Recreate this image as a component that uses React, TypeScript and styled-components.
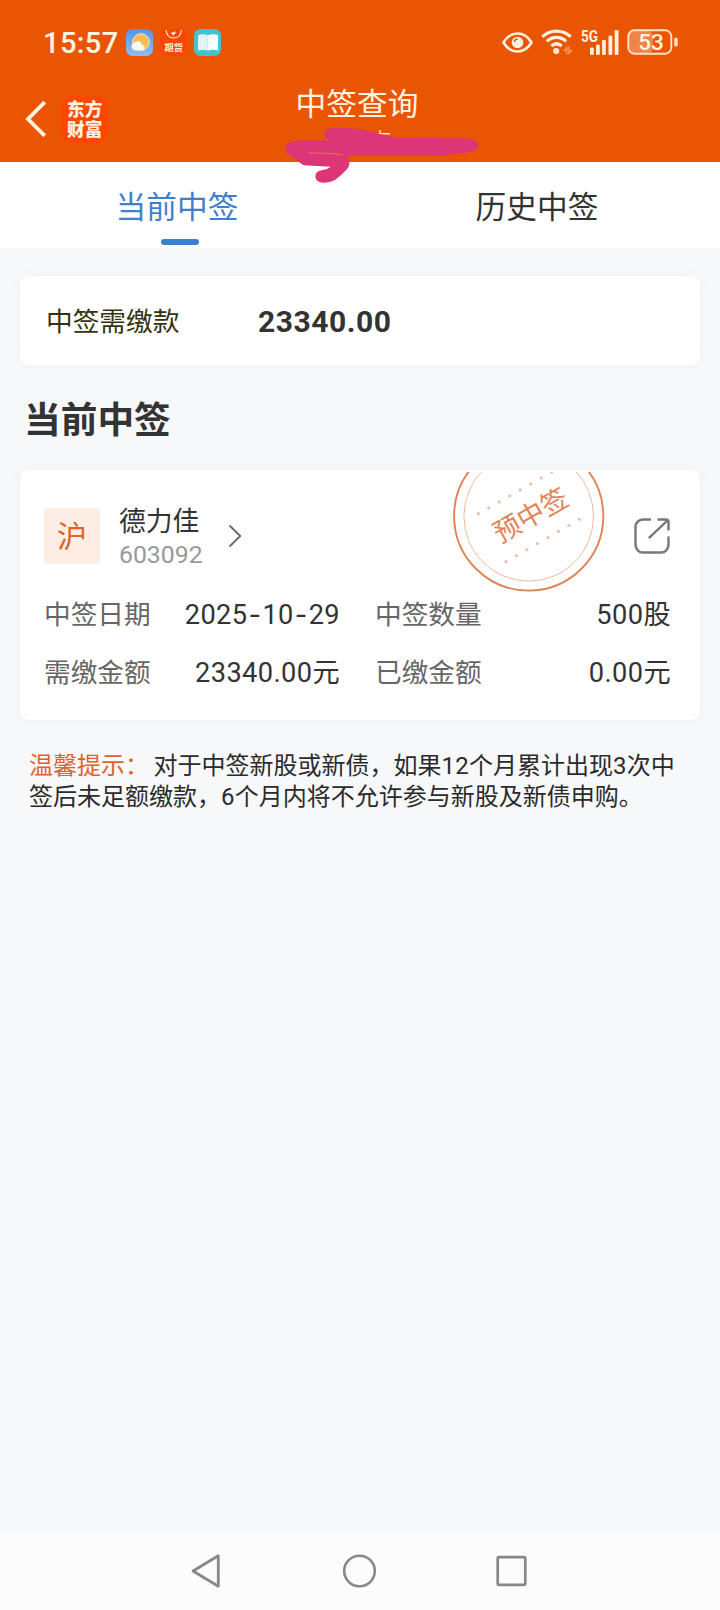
import React from "react";
import styled, { createGlobalStyle } from "styled-components";

const cjk = '"Noto Sans CJK SC", sans-serif';
const latin = 'Roboto, "Noto Sans CJK SC", sans-serif';

const GlobalStyle = createGlobalStyle`
  *, *::before, *::after { box-sizing: border-box; }
  body { margin: 0; background: #f7f8fa; font-family: ${cjk}; color: #333; }
  svg { display: block; flex: none; overflow: visible; }
`;

const Screen = styled.div`
  width: 720px;
  height: 1610px;
  display: flex;
  flex-direction: column;
  background: #f7f8fa;
  overflow: hidden;
`;

const Header = styled.header`
  position: relative;
  height: 162px;
  background: #ea5504;
  color: #fff3e2;
  flex: none;
`;

const StatusBar = styled.div`
  height: 84px;
  padding: 0 42px 0 43px;
  display: flex;
  align-items: center;
  justify-content: space-between;
`;

const StatusGroup = styled.div<{ $gap: number }>`
  display: flex;
  align-items: center;
  gap: ${(p) => p.$gap}px;
`;

const Clock = styled.span`
  width: 76px;
  font: 500 29px/30px ${latin};
  letter-spacing: 0.4px;
  padding-top: 1px;
  white-space: nowrap;
`;

const AppBar = styled.div`
  height: 78px;
  display: grid;
  grid-template-columns: 1fr auto 1fr;
  padding: 0 6px 0 0;
`;

const BackArea = styled.div`
  display: flex;
  gap: 15px;
  padding: 10px 0 0 25px;
  align-items: center;
  height: 58px;
  margin-top: 1px;
`;

const Brand = styled.div`
  width: 47px;
  height: 47px;
  padding: 2px 5px 0 6px;
  border-radius: 10px;
  background: #ff4700;
  font: 900 17.7px/20px "Noto Sans CJK SC", sans-serif;
  color: #fff1e0;
  word-break: break-all;
`;

const Title = styled.h1`
  margin: -2px 0 0;
  font: 400 30.7px/40px ${cjk};
  white-space: nowrap;
`;

const Scribble = styled.svg`
  position: absolute;
  left: 280px;
  top: 122px;
  z-index: 2;
`;

const Tabs = styled.nav`
  height: 86px;
  flex: none;
  display: grid;
  grid-template-columns: 1fr 1fr;
  background: #fff;
`;

const Tab = styled.div<{ $active?: boolean }>`
  display: flex;
  flex-direction: column;
  align-items: center;
  padding-top: 21px;
  font-size: 30.7px;
  line-height: 44px;
  color: ${(p) => (p.$active ? "#3f7fcf" : "#333")};
`;

const TabLabel = styled.span`
  padding-right: 6px;
`;

const Indicator = styled.span`
  width: 38px;
  height: 6px;
  border-radius: 3px;
  margin-top: 12px;
  background: #3f7fcf;
`;

const Content = styled.main`
  flex: 1;
  padding: 28px 20px 0;
`;

const Card = styled.section`
  position: relative;
  border-radius: 9px;
  background: #fff;
  box-shadow: 0 0 12px rgba(60, 75, 90, 0.05);
`;

const DueCard = styled(Card)`
  height: 89px;
  display: flex;
  align-items: center;
  padding-left: 26px;
`;

const DueLabel = styled.span`
  width: 212px;
  font-size: 26.7px;
  color: #33330f;
  padding-bottom: 2px;
`;

const DueAmount = styled.strong`
  font: 700 30px/36px ${latin};
  letter-spacing: 0.55px;
  padding-top: 3px;
`;

const SectionTitle = styled.h2`
  margin: 0;
  height: 105px;
  padding: 26px 0 0 4px;
  font: 700 36.7px/52px ${cjk};
`;

const StockCard = styled(Card)`
  height: 250px;
  padding: 32px 29px 0 24px;
`;

const StockHead = styled.div`
  display: flex;
  align-items: center;
  height: 68px;
`;

const Market = styled.span`
  width: 56px;
  height: 56px;
  border-radius: 3px;
  background: #fdede4;
  color: #d9652a;
  font-size: 30px;
  line-height: 53px;
  text-align: center;
`;

const StockName = styled.div`
  width: 90px;
  margin: 0 19px 0 19px;
  display: flex;
  flex-direction: column;
  white-space: nowrap;
`;

const Name = styled.span`
  font-size: 26.8px;
  line-height: 35px;
`;

const Code = styled.span`
  font: 400 24.8px/32px ${latin};
  color: #999;
  padding-top: 2px;
`;

const ShareSlot = styled.div`
  margin: 0 1px 0 auto;
`;

const Stamp = styled.svg`
  position: absolute;
  left: 429px;
  top: 2px;
  overflow: hidden;
`;

const Details = styled.div`
  display: grid;
  grid-template-columns: 296px 296px;
  column-gap: 35px;
  grid-auto-rows: 58px;
  margin-top: 15px;
`;

const Detail = styled.div`
  display: flex;
  justify-content: space-between;
  align-items: center;
  white-space: nowrap;
`;

const DetailLabel = styled.span`
  font-size: 26.7px;
  color: #666;
  padding-bottom: 4px;
`;

const DetailValue = styled.span`
  font: 400 27.2px/36px ${latin};
  letter-spacing: 0.4px;
  padding-top: 2px;
`;

const Dash = styled.span`
  font-family: Inter, sans-serif;
  padding: 0 1px;
`;

const Tip = styled.p`
  margin: 31px 0 0;
  padding: 0 10px 0 9px;
  font: 400 24px/31px ${latin};
  color: #2b2b2b;
  white-space: nowrap;
`;

const TipLead = styled.span`
  color: #e0622a;
  margin-right: -1.5px;
`;

const Num = styled.span`
  letter-spacing: 0.3px;
`;

const NavBar = styled.footer`
  height: 78px;
  flex: none;
  background: #fcfcfc;
  display: flex;
  align-items: center;
  justify-content: space-between;
  padding: 0 193px 0 191px;
`;

const details: { label: string; value: string }[] = [
  { label: "中签日期", value: "2025-10-29" },
  { label: "中签数量", value: "500股" },
  { label: "需缴金额", value: "23340.00元" },
  { label: "已缴金额", value: "0.00元" },
];

const WeatherIcon = () => (
  <svg width="27" height="27" viewBox="0 0 27 27">
    <defs>
      <linearGradient id="sky" x1="0" y1="0" x2="0" y2="1">
        <stop offset="0" stopColor="#5394ea" />
        <stop offset="1" stopColor="#8dbdf5" />
      </linearGradient>
    </defs>
    <rect width="27" height="27" rx="6.5" fill="url(#sky)" />
    <circle cx="15" cy="13" r="8.3" fill="#f7bd55" stroke="#ffe6b0" strokeWidth="1" />
    <path d="M9 21.5a4 4 0 0 1-.6-7.8 4.3 4.3 0 0 1 7.5 2 3 3 0 0 1 .9 5.8z" fill="#fff7ec" />
  </svg>
);

const FuturesIcon = () => (
  <svg width="27" height="27" viewBox="0 0 27 27">
    <rect width="27" height="27" rx="6.5" fill="#fb4704" />
    <path d="M6 1C6.5 6 9.500 9 13.800 9S21 6 21.500 1" fill="none" stroke="#fff1e0" strokeWidth="1.1" />
    <path d="M10.500 4L16 2.200l-1 1.500 1 1-2 .5-.3 1.800-1.700-2z" fill="#fff1e0" />
    <text x="13.700" y="22" textAnchor="middle" fontSize="9.200" fontWeight="700" fontFamily="Noto Sans CJK SC" fill="#fff1e0">期货</text>
  </svg>
);

const BookIcon = () => (
  <svg width="27" height="27" viewBox="0 0 27 27">
    <rect width="27" height="27" rx="6.5" fill="#42c3cf" />
    <path d="M4 6.200c3.500-1.500 7-1.200 9.800 0v15.500C11 20.500 7.500 20.500 4 21.500z" fill="#e0f4f5" />
    <path d="M24 6.200c-3.500-1.500-7-1.200-10.200 0v15.500c3-1.200 6.700-1.200 10.200-.2z" fill="#f7fdfb" />
  </svg>
);

const EyeIcon = () => (
  <svg width="31" height="21" viewBox="0 0 31 21" fill="none" stroke="#fff0dc">
    <path d="M1.500 10.500C5 4.500 10 1.500 15.500 1.500S26 4.500 29.500 10.500C26 16.500 21 19.500 15.500 19.500S5 16.500 1.500 10.500z" strokeWidth="2.600" strokeLinejoin="round" />
    <circle cx="15.500" cy="10.500" r="5.800" fill="#fff0dc" stroke="none" />
    <path d="M12.500 10a3 3 0 0 1 3-3" stroke="#ea5504" strokeWidth="1.400" />
  </svg>
);

const WifiIcon = () => (
  <svg width="32" height="26" viewBox="0 0 32 26" fill="none" stroke="#fff0dc" strokeWidth="3.200">
    <path d="M1.200 7.800C9.500.2 21.500.2 29.800 7.800" />
    <path d="M5.800 12.400C11.500 7 19.500 7 25.200 12.400" />
    <path d="M10.300 17c3.300-2.900 7.100-2.900 10.400 0" />
    <circle cx="15.200" cy="22" r="3" fill="#fff0dc" stroke="none" />
    <path d="M25.800 17.500v8M28 17.500v8" stroke="#f4935c" strokeWidth="1.500" />
    <path d="M26 17.500l-4 4.500h4zM28 25.500l4-4.500h-4z" fill="#f4935c" stroke="none" />
  </svg>
);

const SignalIcon = () => (
  <svg width="38" height="26" viewBox="0 0 38 26" fill="#fff0dc">
    <text x="0" y="13" fontSize="16" fontWeight="700" fontFamily="Roboto" textLength="17" lengthAdjust="spacingAndGlyphs">5G</text>
    <rect x="9" y="18.500" width="3.800" height="7.500" rx="1.300" />
    <rect x="15" y="15.500" width="3.800" height="10.500" rx="1.300" />
    <rect x="21" y="11" width="3.800" height="15" rx="1.300" />
    <rect x="27.500" y="6.500" width="3.800" height="19.500" rx="1.300" />
    <rect x="33.700" y="1" width="3.800" height="25" rx="1.300" />
  </svg>
);

const BatteryIcon = () => (
  <svg width="51" height="26" viewBox="0 0 51 26">
    <rect x="2" y="2" width="24" height="22" rx="5" fill="#f0844a" />
    <rect x="1.300" y="1.300" width="43" height="23.400" rx="6" fill="none" stroke="#ffe3c8" strokeWidth="1.900" />
    <rect x="47.200" y="8.500" width="3.500" height="9" rx="1.500" fill="#ffe3c8" />
    <text x="24" y="21" textAnchor="middle" fontSize="22.500" fontWeight="500" fontFamily="Roboto" fill="#fff3e2">53</text>
  </svg>
);

const dots = Array.from({ length: 8 }, (_, i) => i);

export default function App() {
  return (
    <>
      <GlobalStyle />
      <Screen>
        <Header>
          <StatusBar>
            <StatusGroup $gap={7}>
              <Clock>15:57</Clock>
              <WeatherIcon />
              <FuturesIcon />
              <BookIcon />
            </StatusGroup>
            <StatusGroup $gap={8}>
              <EyeIcon />
              <WifiIcon />
              <SignalIcon />
              <BatteryIcon />
            </StatusGroup>
          </StatusBar>
          <AppBar>
            <BackArea>
              <svg width="21" height="36" viewBox="0 0 21 36" fill="none" stroke="#fff3e2" strokeWidth="3.800">
                <path d="M19.800 1.200L3 18l16.800 16.800" />
              </svg>
              <Brand>东方财富</Brand>
            </BackArea>
            <Title>中签查询</Title>
          </AppBar>
          <Scribble width="204" height="66" viewBox="0 0 204 66">
            <path d="M100 8v6M95 11.800h15M46 14.500l3 5" stroke="#ffe6d0" strokeWidth="1.500" />
            <g transform="translate(-20 -52) scale(.33333)">
              <path
                d="M193 190Q196 174 225 174C290 170 345 188 405 204L620 205Q652 208 655 227Q652 244 620 248C570 252 560 257 500 257H262Q272 270 266 290Q258 304 225 330Q210 339 188 338Q167 336 166 319Q167 304 185 301Q200 300 212 290L132 286Q122 282 115 273Q75 252 75 235Q78 214 110 212L204 211Q192 204 193 190z"
                fill="#dc3578"
              />
              <path d="M146 249L212 250L248 255" fill="none" stroke="#ee7348" strokeWidth="3" />
            </g>
          </Scribble>
        </Header>

        <Tabs>
          <Tab $active>
            <TabLabel>当前中签</TabLabel>
            <Indicator />
          </Tab>
          <Tab>
            <TabLabel>历史中签</TabLabel>
          </Tab>
        </Tabs>

        <Content>
          <DueCard>
            <DueLabel>中签需缴款</DueLabel>
            <DueAmount>23340.00</DueAmount>
          </DueCard>

          <SectionTitle>当前中签</SectionTitle>

          <StockCard>
            <Stamp width="160" height="126" viewBox="450 472 160 126">
              <g fill="none" stroke="#df8354">
                <circle cx="529.700" cy="516" r="74.600" strokeWidth="1.900" />
                <circle cx="529.700" cy="516.300" r="64.800" strokeWidth="0.900" stroke="#e8b498" />
              </g>
              <g fill="#ecc0a8">
                {dots.map((i) => (
                  <React.Fragment key={i}>
                    <circle cx={479.300 + i * 10.480} cy={513.700 - i * 5.950} r="1.600" />
                    <circle cx={507 + i * 10.480} cy={561.700 - i * 6.050} r="1.600" />
                  </React.Fragment>
                ))}
              </g>
              <text x="531.700" y="525" transform="rotate(-29.500 531.700 515)" textAnchor="middle" fontSize="27" fontFamily="Noto Sans CJK SC" fill="#e08458">
                预中签
              </text>
            </Stamp>
            <StockHead>
              <Market>沪</Market>
              <StockName>
                <Name>德力佳</Name>
                <Code>603092</Code>
              </StockName>
              <svg width="14" height="24" viewBox="0 0 14 24" fill="none" stroke="#666" strokeWidth="1.800">
                <path d="M1.500 1.500L12.300 12 1.500 22.500" />
              </svg>
              <ShareSlot>
                <svg width="36" height="36" viewBox="0 0 36 36" fill="none" stroke="#777" strokeWidth="2.400">
                  <path d="M17 1.500H9A7.500 7.500 0 0 0 1.500 9v18A7.500 7.500 0 0 0 9 34.500h18a7.500 7.500 0 0 0 7.500-7.500v-8.500" />
                  <path d="M23.500 1.500h8.500a2.500 2.500 0 0 1 2.500 2.500v8.500M34 2L14.800 20.200" />
                </svg>
              </ShareSlot>
            </StockHead>
            <Details>
              {details.map((d) => (
                <Detail key={d.label}>
                  <DetailLabel>{d.label}</DetailLabel>
                  <DetailValue>
                    {d.value.split(/(-)/).map((part, i) => (part === "-" ? <Dash key={i}>-</Dash> : part))}
                  </DetailValue>
                </Detail>
              ))}
            </Details>
          </StockCard>

          <Tip>
            <TipLead>温馨提示：</TipLead> 对于中签新股或新债，如果<Num>12</Num>个月累计出现<Num>3</Num>次中
            <br />
            签后未足额缴款，<Num>6</Num>个月内将不允许参与新股及新债申购。
          </Tip>
        </Content>

        <NavBar>
          <svg width="30" height="36" viewBox="0 0 30 36" fill="none" stroke="#888" strokeWidth="2.800" strokeLinejoin="round">
            <path d="M27.300 2.800v30.400L2 18z" />
          </svg>
          <svg width="34" height="34" viewBox="0 0 34 34" fill="none" stroke="#888" strokeWidth="2.600">
            <circle cx="17.500" cy="17" r="15.300" />
          </svg>
          <svg width="31" height="31" viewBox="0 0 31 31" fill="none" stroke="#888" strokeWidth="2.700">
            <rect x="1.700" y="1.200" width="27.600" height="27.600" rx="1" />
          </svg>
        </NavBar>
      </Screen>
    </>
  );
}
